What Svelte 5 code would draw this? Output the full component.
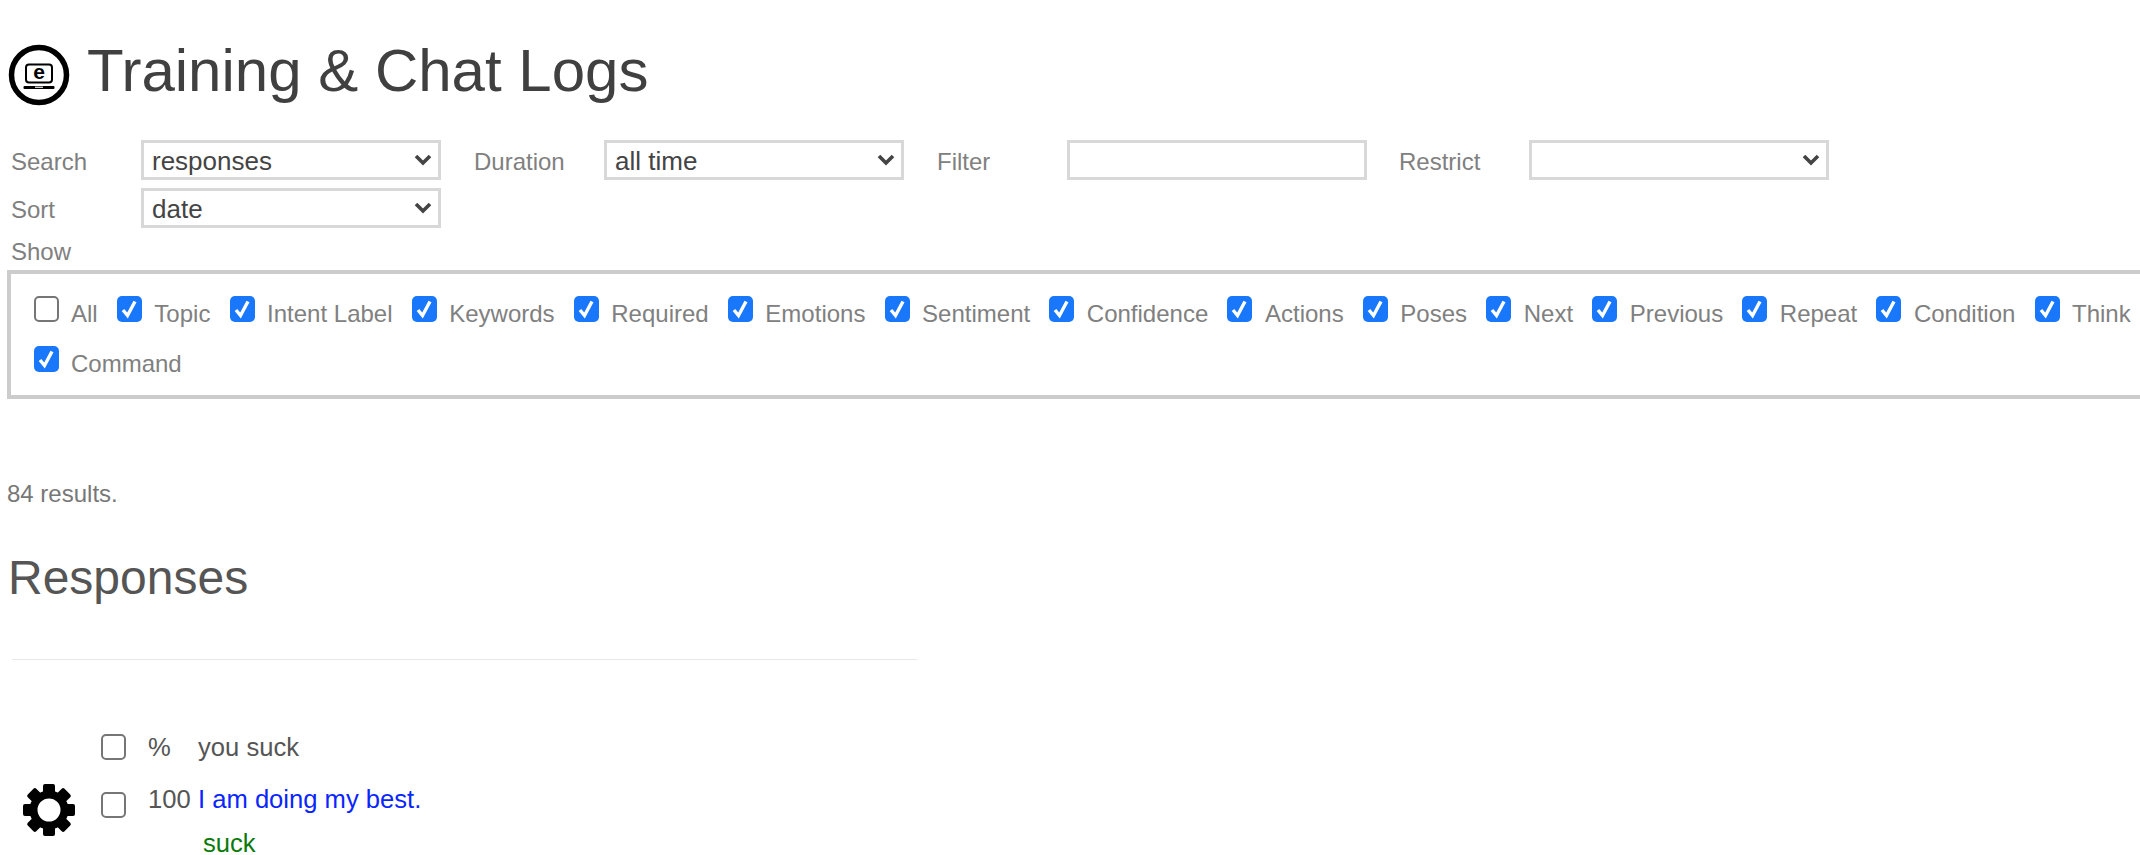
<script lang="ts">
  const filters = [
    { label: 'Search', value: 'responses' },
    { label: 'Duration', value: 'all time' },
    { label: 'Filter', input: true },
    { label: 'Restrict', value: '' },
  ];

  const columns = [
    { name: 'All', on: false },
    { name: 'Topic', on: true },
    { name: 'Intent Label', on: true },
    { name: 'Keywords', on: true },
    { name: 'Required', on: true },
    { name: 'Emotions', on: true },
    { name: 'Sentiment', on: true },
    { name: 'Confidence', on: true },
    { name: 'Actions', on: true },
    { name: 'Poses', on: true },
    { name: 'Next', on: true },
    { name: 'Previous', on: true },
    { name: 'Repeat', on: true },
    { name: 'Condition', on: true },
    { name: 'Think', on: true },
    { name: 'Command', on: true },
  ];

  const teeth = [0, 45, 90, 135, 180, 225, 270, 315];
</script>

<div class="page">
  <h1>
    <svg class="logo" viewBox="0 0 62 62" aria-hidden="true">
      <circle cx="31" cy="31" r="27.500" fill="none" stroke="#000" stroke-width="5.500" />
      <rect x="18" y="20.500" width="26" height="18" rx="3" fill="none" stroke="#000" stroke-width="2" />
      <text x="31" y="35" text-anchor="middle" class="logo-e">e</text>
      <rect x="15.500" y="42" width="31" height="3" rx="1" fill="#000" />
      <rect x="27" y="42.600" width="8" height="1.400" fill="#ccc" />
    </svg>
    Training &amp; Chat Logs
  </h1>

  <div class="filters">
    {#each filters as f}
      <div class="field">
        <span class="label">{f.label}</span>
        {#if f.input}
          <input class="ctl" type="text" />
        {:else}
          <select class="ctl">
            <option>{f.value}</option>
          </select>
        {/if}
      </div>
    {/each}
  </div>
  <div class="filters sort">
    <div class="field">
      <span class="label">Sort</span>
      <select class="ctl"><option>date</option></select>
    </div>
  </div>

  <div class="show-label">Show</div>
  <div class="show-box">
    {#each columns as c}
      <label class="opt"><input type="checkbox" checked={c.on} />{c.name}</label>
    {/each}
  </div>

  <p class="count">84 results.</p>
  <h2>Responses</h2>
  <hr />

  <div class="entry">
    <svg class="gear" viewBox="0 0 52 52" aria-hidden="true">
      {#each teeth as t}
        <rect x="20" y="0" width="12" height="14" rx="2" transform="rotate({t} 26 26)" />
      {/each}
      <circle cx="26" cy="26" r="15.500" fill="none" stroke="#000" stroke-width="8" />
    </svg>
    <input class="row-check first" type="checkbox" />
    <span class="pct first">%</span>
    <span class="question first">you suck</span>
    <input class="row-check second" type="checkbox" />
    <span class="pct second">100</span>
    <a class="answer second" href="#top">I am doing my best.</a>
    <span class="keyword">suck</span>
  </div>
</div>

<style>
  :global(body) {
    margin: 0;
    background: #fff;
  }

  .page {
    height: 855px;
    overflow: hidden;
    font-family: "Liberation Sans", Arial, sans-serif;
    font-size: 24px;
    color: #808080;
  }

  h1 {
    display: flex;
    align-items: center;
    gap: 17px;
    margin: 0;
    padding: 38px 0 0 8px;
    height: 64px;
    font-size: 60px;
    font-weight: 400;
    color: #404040;
    white-space: nowrap;
  }

  .logo { width: 62px; height: 62px; flex: none; margin-top: 10px; }
  .logo-e { font-family: "Liberation Sans", sans-serif; font-size: 21px; font-weight: 700; fill: #000; }

  .filters {
    display: flex;
    padding: 38px 0 0 10px;
  }
  .filters.sort { padding-top: 8px; }

  .field {
    display: flex;
    align-items: center;
    width: 463px;
    flex: none;
  }
  .field:last-child:not(:first-child) { margin-left: -1px; }

  .label { width: 131px; flex: none; padding-top: 4px; padding-left: 1px; box-sizing: border-box; }

  .ctl {
    box-sizing: border-box;
    width: 300px;
    height: 40px;
    border: 3px solid #d8d8d8;
    border-radius: 0;
    background: #fff;
    padding: 2px 0 0 8px;
    margin: 0;
    font: 26px "Liberation Sans", Arial, sans-serif;
    color: #444;
    outline: none;
  }

  select.ctl {
    appearance: none;
    background-image: url("data:image/svg+xml,%3Csvg xmlns='http://www.w3.org/2000/svg' viewBox='0 0 18 12'%3E%3Cpath d='M2 2l7 7 7-7' fill='none' stroke='%23444' stroke-width='3.6'/%3E%3C/svg%3E");
    background-repeat: no-repeat;
    background-size: 18px 12px;
    background-position: right 6px center;
  }

  .show-label { padding: 10px 0 0 11px; line-height: 28px; }

  .show-box {
    display: flex;
    flex-wrap: wrap;
    column-gap: 19.2px;
    row-gap: 18px;
    box-sizing: border-box;
    width: 2160px;
    margin: 4px 0 0 7px;
    padding: 22px 0 16.6px 22.5px;
    border: 4px solid #ccc;
  }

  .opt {
    display: flex;
    align-items: flex-end;
    gap: 12.5px;
    height: 32px;
    line-height: 28px;
    white-space: nowrap;
  }

  input[type='checkbox'] {
    appearance: none;
    box-sizing: border-box;
    width: 25px;
    height: 26px;
    margin: 0;
    flex: none;
    border: 2px solid #767676;
    border-radius: 5px;
    background: #fff;
  }

  .opt input { align-self: flex-start; }

  input[type='checkbox']:checked {
    border: none;
    background-color: #1877fb;
    background-image: url("data:image/svg+xml,%3Csvg xmlns='http://www.w3.org/2000/svg' viewBox='0 0 25 26'%3E%3Cpath d='M6 14l4.500 5.500L18 5.500' fill='none' stroke='%23fff' stroke-width='3.4'/%3E%3C/svg%3E");
  }

  .count { margin: 0; padding: 81.4px 0 0 7px; line-height: 28px; color: #777; }

  h2 {
    margin: 0;
    padding: 44.5px 0 0 8px;
    font-size: 48px;
    line-height: 52px;
    font-weight: 400;
    color: #555;
  }

  hr {
    width: 905px;
    margin: 54.5px 0 0 12px;
    border: none;
    border-top: 1px solid #e8e8e8;
  }

  .entry {
    display: grid;
    grid-template-columns: 52px 26px 47px 1fr;
    grid-template-rows: 26px 26px 34px;
    padding: 72px 0 0 23px;
    font-size: 25.6px;
    color: #555;
  }

  .gear {
    grid-column: 1;
    grid-row: 2 / 4;
    width: 52px;
    height: 52px;
    margin-top: 26px;
  }

  .row-check { grid-column: 2; margin-left: 26px !important; }
  .row-check.first { margin-top: 2px; }
  .pct { grid-column: 3; margin-left: 47px; line-height: 30px; white-space: nowrap; }
  .question, .answer { grid-column: 4; margin-left: 50px; line-height: 30px; white-space: nowrap; }
  .first { grid-row: 1; }
  .second { grid-row: 2; margin-top: 26px; }
  .row-check.second { margin-top: 34px; }
  .answer { color: #0a26ff; text-decoration: none; }
  .keyword { grid-column: 4; grid-row: 3; margin: 44px 0 0 55px; color: #0a7a0a; line-height: 30px; white-space: nowrap; }
</style>
